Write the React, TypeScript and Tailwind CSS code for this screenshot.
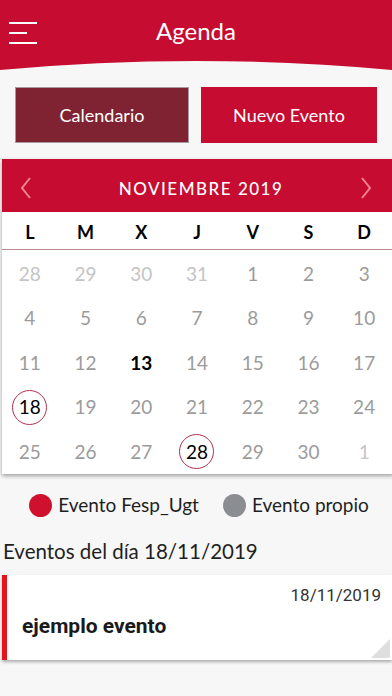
const weekdays = ["L", "M", "X", "J", "V", "S", "D"];

type Day = { n: number; kind: "prev" | "cur" | "next" };

const days: Day[] = [
	...[28, 29, 30, 31].map((n) => ({ n, kind: "prev" as const })),
	...Array.from({ length: 30 }, (_, i) => ({ n: i + 1, kind: "cur" as const })),
	{ n: 1, kind: "next" },
];

const TODAY = 13;
const SELECTED = 18;
const WITH_EVENT = 28;

function DayCell({ day }: { day: Day }) {
	const isCur = day.kind === "cur";
	const circled = isCur && (day.n === SELECTED || day.n === WITH_EVENT);
	const bold = isCur && day.n === TODAY;
	let color = "text-[#9b9b9b]";
	if (!isCur) color = "text-[#c4c4c4]";
	if (circled || bold) color = "text-black";

	return (
		<div className="h-[44.4px] flex items-center justify-center">
			<span
				className={`w-[35px] h-[35px] rounded-full flex items-center justify-center text-[19px] ${color} ${
					bold ? "font-bold" : ""
				} ${circled ? "border-[1.5px] border-[#b2314f]" : ""}`}
			>
				{day.n}
			</span>
		</div>
	);
}

export default function App() {
	return (
		<div
			className="w-[392px] h-[696px] bg-[#f7f7f7] overflow-hidden"
			style={{ fontFamily: "Lato, 'Open Sans', sans-serif" }}
		>
			{/* top bar */}
			<div className="bg-[#c60c30] h-[61px] flex items-center relative">
				<div className="w-[38px] pl-[9px] flex flex-col gap-[8px] pt-[4px]">
					<span className="block h-[2px] w-[28px] bg-white" />
					<span className="block h-[2px] w-[18px] bg-white" />
					<span className="block h-[2px] w-[28px] bg-white" />
				</div>
				<h1 className="flex-1 text-center text-white text-[24px] pr-[38px] pt-[1px]">
					Agenda
				</h1>
			</div>
			<svg width="392" height="9" viewBox="0 0 392 9" className="block">
				<path d="M0 0 H392 V9 Q196 -9 0 9 Z" fill="#c60c30" />
			</svg>

			{/* tabs */}
			<div className="flex gap-[12px] px-[15px] mt-[17px]">
				<button className="w-[174px] h-[56px] bg-[#7f2333] border border-[#a89aa0] text-white text-[18px]">
					Calendario
				</button>
				<button className="w-[176px] h-[56px] bg-[#c60c30] text-white text-[18px]">
					Nuevo Evento
				</button>
			</div>

			{/* calendar */}
			<div className="ml-[2px] w-[392px] mt-[16px] bg-white shadow-[0_2px_4px_rgba(0,0,0,0.35)]">
				<div className="bg-[#c60c30] h-[53px] flex items-center justify-between px-[18px] pt-[4px]">
					<svg width="12" height="22" viewBox="0 0 12 22" fill="none">
						<path d="M10 1 L2 11 L10 21" stroke="#f28595" strokeWidth="2" />
					</svg>
					<span className="text-white text-[17px] font-medium tracking-[1.5px] pl-[10px] pt-[3px]">
						NOVIEMBRE 2019
					</span>
					<svg width="12" height="22" viewBox="0 0 12 22" fill="none" className="mr-[4px]">
						<path d="M2 1 L10 11 L2 21" stroke="#f28595" strokeWidth="2" />
					</svg>
				</div>
				<div className="grid grid-cols-7 h-[38px] items-center border-b border-[#b98a94] pr-[2px] pt-[4px]">
					{weekdays.map((w) => (
						<span key={w} className="text-center text-[18px] font-bold text-black">
							{w}
						</span>
					))}
				</div>
				<div className="grid grid-cols-7 pr-[2px] pt-[2px]">
					{days.map((d, i) => (
						<DayCell key={i} day={d} />
					))}
				</div>
			</div>

			{/* legend */}
			<div className="flex items-center justify-center gap-[24px] mt-[17px] pl-[6px] text-[19px] text-[#1f1f1f]">
				<div className="flex items-center gap-[6px]">
					<span className="w-[23px] h-[23px] rounded-full bg-[#d0102f]" />
					<span>Evento Fesp_Ugt</span>
				</div>
				<div className="flex items-center gap-[6px]">
					<span className="w-[23px] h-[23px] rounded-full bg-[#8a8d91]" />
					<span>Evento propio</span>
				</div>
			</div>

			<p className="mt-[17px] pl-[3px] text-[20.5px] text-[#1f1f1f]">Eventos del día 18/11/2019</p>

			{/* event card */}
			<div
				className="ml-[2px] mt-[8px] w-[390px] h-[85px] bg-white border-l-[5px] border-[#e3141b] shadow-[0_2px_3px_rgba(0,0,0,0.3)] relative"
				style={{ fontFamily: "Roboto, sans-serif" }}
			>
				<div className="text-right pr-[11px] pt-[8px] text-[17px] text-[#333]">18/11/2019</div>
				<div className="pl-[15px] pt-[2px] text-[21px] font-bold text-[#1a1a1a]">ejemplo evento</div>
				<svg width="19" height="19" viewBox="0 0 19 19" className="absolute right-[2px] bottom-[2px]">
					<path d="M19 0 V19 H0 Z" fill="#dedede" />
				</svg>
			</div>
		</div>
	);
}
